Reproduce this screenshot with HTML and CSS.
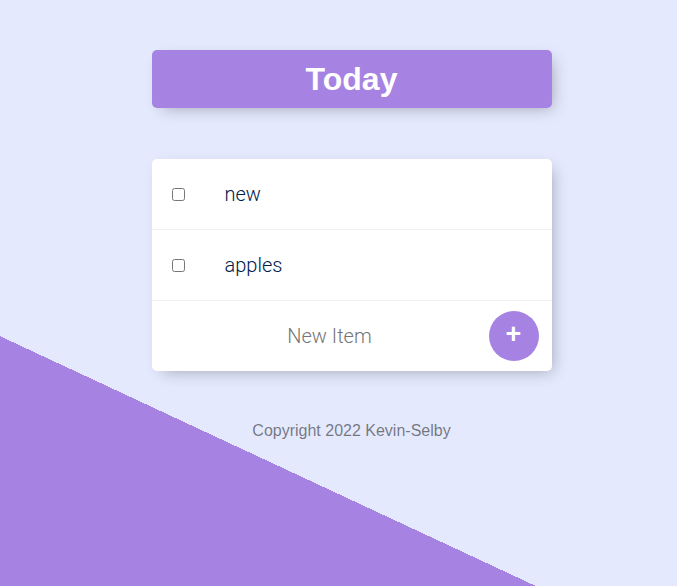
FILE: index.html
```html
<!DOCTYPE html>
<html lang="en">
<head>
  <meta charset="UTF-8" />
  <title>To Do List</title>
  <link rel="stylesheet" href="styles.css">
</head>
<body>
  <div class="box" id="heading">
    <h1>Today</h1>
  </div>

  <div class="box list">
    <div class="item">
      <input type="checkbox">
      <p>new</p>
    </div>
    <div class="item">
      <input type="checkbox">
      <p>apples</p>
    </div>

    <form class="item" action="/" method="post">
      <input type="text" name="newItem" placeholder="New Item" autocomplete="off">
      <button type="submit" name="list">+</button>
    </form>
  </div>

  <footer>Copyright 2022 Kevin-Selby</footer>
</body>
</html>
```

FILE: styles.css
```css
html {
  background-color: #E4E9FD;
  background-image: linear-gradient(25deg, #A683E3 50%, #E4E9FD 50%);
  min-height: 988px;
  font-family: "Liberation Sans", Arial, sans-serif;
}
body {
  margin: 0 0 0 26px;
  padding-top: 1px;
}
h1 {
  color: #fff;
  padding: 10px;
  margin: 0;
  font-size: 32px;
  line-height: 38px;
}
.box {
  max-width: 400px;
  margin: 49px auto 50px;
  background: white;
  border-radius: 5px;
  box-shadow: 5px 5px 15px -5px rgba(0, 0, 0, 0.3);
}
.list { margin-top: 51px; }
#heading {
  background-color: #A683E3;
  text-align: center;
}
.item {
  min-height: 70px;
  display: flex;
  align-items: center;
  border-bottom: 1px solid #F1F1F1;
}
.item:last-child { border-bottom: 0; }
input[type="checkbox"] { margin: 20px; }
p {
  margin: 0;
  padding: 20px;
  font-family: Roboto, "Liberation Sans", sans-serif;
  font-size: 20px;
  font-weight: 300;
  color: #00204a;
}
form.item {
  margin: 0 0 0 20px;
}
form input[type="text"] {
  text-align: center;
  height: 60px;
  border: none;
  font-size: 20px;
  font-weight: 300;
  width: 310px;
  padding: 0 0 0 3px;
  font-family: Roboto, "Liberation Sans", sans-serif;
  outline: none;
}
form input::placeholder { color: #757575; }
button {
  min-height: 50px;
  width: 50px;
  margin-left: 4px;
  border-radius: 50%;
  border: 0;
  background-color: #A683E3;
  color: #fff;
  font-size: 27px;
  font-weight: bold;
  font-family: inherit;
  padding: 0 0 4px;
}
footer {
  color: rgba(0, 0, 0, 0.5);
  text-align: center;
  font-size: 16px;
  padding-top: 1px;
}
```
